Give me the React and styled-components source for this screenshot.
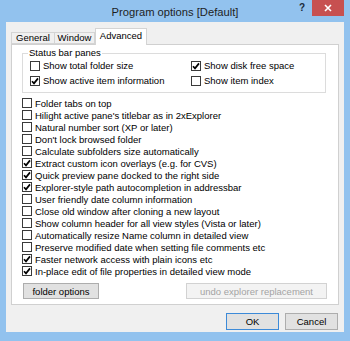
import React from "react";
import styled, { createGlobalStyle } from "styled-components";

const Global = createGlobalStyle`
  html, body { margin: 0; padding: 0; background: #92c2ee; }
  body { font-family: "Liberation Sans", Arial, sans-serif; font-size: 9.5px; color: #000; }
  * { box-sizing: border-box; }
`;

const Window = styled.div`
  width: 350px;
  height: 341px;
  background: #92c2ee;
  display: flex;
  flex-direction: column;
`;

const TitleBar = styled.div`
  height: 22px;
  display: flex;
  align-items: flex-start;
`;

const Title = styled.div`
  flex: 1;
  margin-left: 54px;
  text-align: center;
  font-size: 11.2px;
  line-height: 24px;
  color: #1e1e1e;
`;

const Help = styled.div`
  width: 12px;
  height: 16px;
  margin-right: 4px;
  font-size: 10px;
  font-weight: bold;
  line-height: 16px;
  text-align: center;
  color: #1a2a3a;
`;

const Close = styled.div`
  width: 32px;
  height: 16px;
  margin-right: 6px;
  background: #c75050;
  display: flex;
  align-items: center;
  justify-content: center;
`;

const Client = styled.div`
  flex: 1;
  margin: 0 6px 9px 6px;
  background: #f0f0f0;
  padding: 6px 5px 2px 5px;
  display: flex;
  flex-direction: column;
`;

const Tabs = styled.div`
  height: 16px;
  display: flex;
  align-items: flex-end;
  position: relative;
  z-index: 1;
`;

const Tab = styled.div`
  width: ${(p) => p.$w}px;
  flex: none;
  height: ${(p) => (p.$active ? "17px" : "12px")};
  margin-bottom: ${(p) => (p.$active ? "-1px" : "0")};
  border: 1px solid #d4d4d4;
  border-bottom: ${(p) => (p.$active ? "none" : "1px solid #d4d4d4")};
  border-left: ${(p) => (p.$first || p.$active ? "1px solid #d4d4d4" : "none")};
  background: ${(p) => (p.$active ? "#fff" : "#f0f0f0")};
  line-height: ${(p) => (p.$active ? "14px" : "10px")};
  text-align: center;
  white-space: nowrap;
`;

const Panel = styled.div`
  height: 261px;
  border: 1px solid #d0d0d0;
  background: #fff;
  padding: 3px 11px 5px 10px;
  display: flex;
  flex-direction: column;
`;

const Group = styled.fieldset`
  margin: 0 1px 0 0;
  min-width: 0;
  border: 1px solid #dcdcdc;
  padding: 0 0 4px 7px;
`;

const Legend = styled.legend`
  margin-left: -2px;
  padding: 0 1px;
  line-height: 10px;
`;

const GroupGrid = styled.div`
  display: grid;
  grid-template-columns: 161px 1fr;
  grid-auto-rows: 15px;
`;

const List = styled.div`
  margin-top: 4px;
  display: flex;
  flex-direction: column;
`;

const Row = styled.div`
  height: ${(p) => p.$h}px;
  display: flex;
  align-items: center;
  gap: 3px;
  white-space: nowrap;
`;

const Box = styled.span`
  width: 10px;
  height: 10px;
  flex: none;
  border: 1px solid #3a3a3a;
  background: #fff;
  display: flex;
  align-items: center;
  justify-content: center;
`;

const PanelButtons = styled.div`
  margin-top: 6px;
  display: flex;
  justify-content: space-between;
  padding-left: 1px;
`;

const Button = styled.div`
  width: ${(p) => p.$w}px;
  height: ${(p) => p.$h}px;
  border: 1px solid ${(p) => (p.$disabled ? "#d2d2d2" : p.$default ? "#3c8ad8" : "#adadad")};
  background: ${(p) => (p.$disabled ? "#f3f3f3" : "#e1e1e1")};
  color: ${(p) => (p.$disabled ? "#a3a3a3" : "#000")};
  display: flex;
  align-items: center;
  justify-content: center;
  white-space: nowrap;
`;

const Footer = styled.div`
  margin-top: 8px;
  display: flex;
  justify-content: flex-end;
  gap: 6px;
  padding-right: 1px;
`;

const Check = ({ checked }) => (
  <Box>
    {checked && (
      <svg width="8" height="8" viewBox="0 0 8 8">
        <path d="M1 4.2 L3 6.4 L7 1.4" fill="none" stroke="#000" strokeWidth="1.7" />
      </svg>
    )}
  </Box>
);

const Item = ({ checked, label, h }) => (
  <Row $h={h}>
    <Check checked={checked} />
    <span>{label}</span>
  </Row>
);

const items = [
  [false, "Folder tabs on top"],
  [false, "Hilight active pane's titlebar as in 2xExplorer"],
  [false, "Natural number sort (XP or later)"],
  [false, "Don't lock browsed folder"],
  [false, "Calculate subfolders size automatically"],
  [true, "Extract custom icon overlays (e.g. for CVS)"],
  [true, "Quick preview pane docked to the right side"],
  [true, "Explorer-style path autocompletion in addressbar"],
  [false, "User friendly date column information"],
  [false, "Close old window after cloning a new layout"],
  [false, "Show column header for all view styles (Vista or later)"],
  [false, "Automatically resize Name column in detailed view"],
  [false, "Preserve modified date when setting file comments etc"],
  [true, "Faster network access with plain icons etc"],
  [true, "In-place edit of file properties in detailed view mode"],
];

export default function App() {
  return (
    <>
      <Global />
      <Window>
        <TitleBar>
          <Title>Program options [Default]</Title>
          <Help>?</Help>
          <Close>
            <svg width="8" height="8" viewBox="0 0 8 8">
              <path d="M1 1 L7 7 M7 1 L1 7" stroke="#fff" strokeWidth="1.6" />
            </svg>
          </Close>
        </TitleBar>
        <Client>
          <Tabs>
            <Tab $first $w={44}>General</Tab>
            <Tab $w={40}>Window</Tab>
            <Tab $active $w={52}>Advanced</Tab>
          </Tabs>
          <Panel>
            <Group>
              <Legend>Status bar panes</Legend>
              <GroupGrid>
                <Item h={15} checked={false} label="Show total folder size" />
                <Item h={15} checked={true} label="Show disk free space" />
                <Item h={15} checked={true} label="Show active item information" />
                <Item h={15} checked={false} label="Show item index" />
              </GroupGrid>
            </Group>
            <List>
              {items.map(([c, l]) => (
                <Item key={l} h={12} checked={c} label={l} />
              ))}
            </List>
            <PanelButtons>
              <Button $w={76} $h={16}>folder options</Button>
              <Button $w={141} $h={16} $disabled>undo explorer replacement</Button>
            </PanelButtons>
          </Panel>
          <Footer>
            <Button $w={53} $h={17} $default>OK</Button>
            <Button $w={53} $h={17}>Cancel</Button>
          </Footer>
        </Client>
      </Window>
    </>
  );
}
